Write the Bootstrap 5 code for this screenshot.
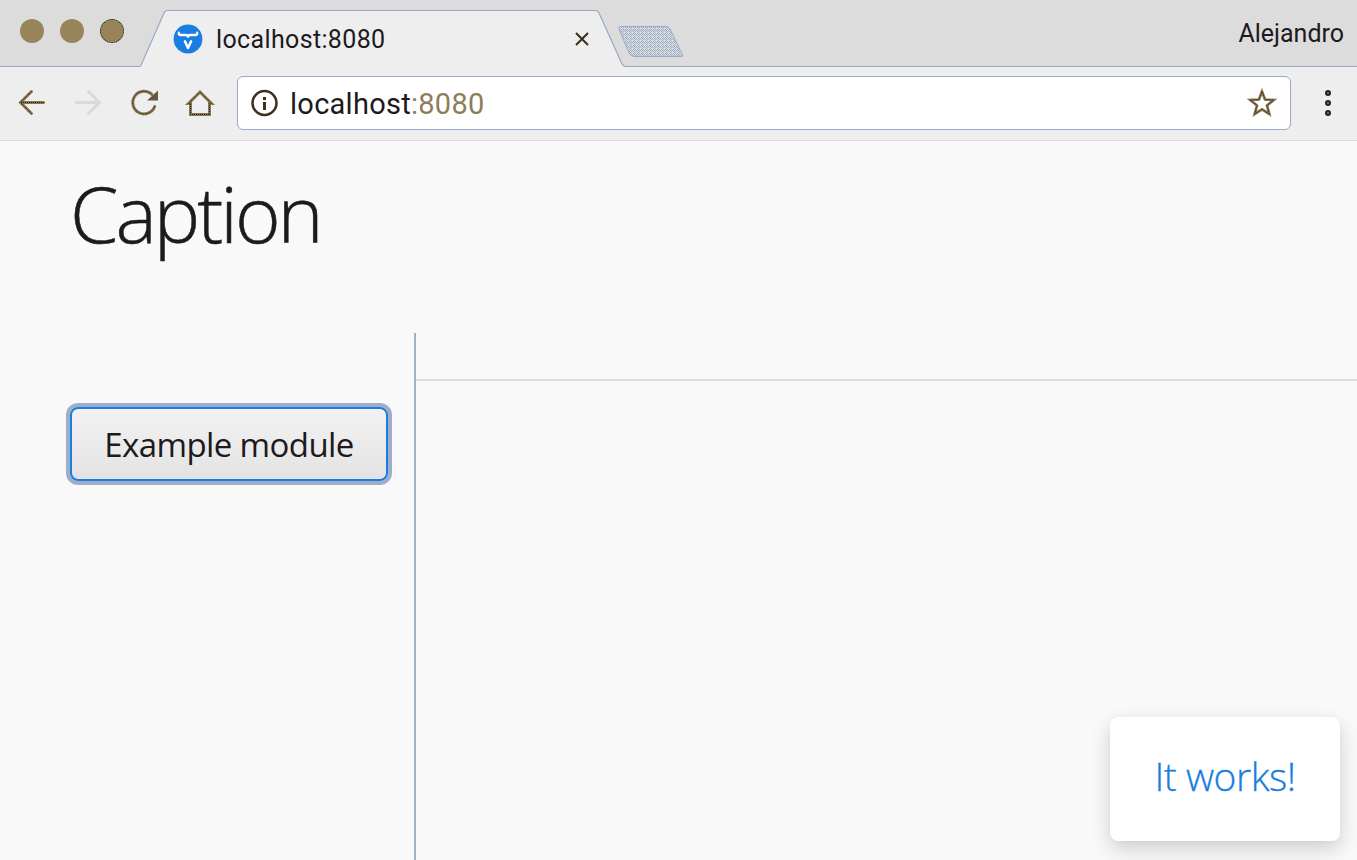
<!DOCTYPE html>
<html lang="en">
<head>
<meta charset="utf-8">
<title>localhost:8080</title>
<link href="https://cdn.jsdelivr.net/npm/bootstrap@5.3.0/dist/css/bootstrap.min.css" rel="stylesheet">
<style>
  body { background: #f9f9f9; color: #1c1a1c; font-family: "Open Sans", sans-serif; height: 860px; }
  svg { display: block; flex: none; }
  .chrome { font-family: Roboto, sans-serif; line-height: 1; }
  .tabstrip { height: 67px; background: #dcdcdc; border-bottom: 1px solid #98abc6; }
  .lights { gap: 16px; padding: 19px 0 0 20px; width: 140px; }
  .light { width: 24px; height: 24px; border-radius: 50%; background: #988459; }
  .light-last { border: 1px dotted #1c1a1c; }
  .browser-tab { width: 486px; height: 67px; padding: 10px 37px 0 33px; }
  .tab-shape { left: 0; top: 0; }
  .tab-title { font-size: 25px; letter-spacing: .36px; margin-left: 13px; padding-top: 2px; }
  .new-tab { margin: 25px 0 0 -9px; }
  .profile { font-size: 25px; letter-spacing: 0; padding: 21px 13px 0 0; }
  .toolbar { height: 74px; background: #eee; border-bottom: 1px solid #dcdcdc; padding: 9px 12px 11px 16px; }
  .nav-icons { gap: 24px; width: 221px; flex: none; }
  .outline { fill: none; stroke: #8c7850; stroke-width: 3; stroke-linecap: round; stroke-linejoin: miter; }
  .grain { fill: none; stroke: #1c1a1c; stroke-width: 1; stroke-dasharray: 1 1; }
  .address { width: 1054px; flex: none; height: 54px; background: #fff; border: 1px solid #98abc6; border-radius: 6px; padding: 0 12px; }
  .url { font-size: 29px; letter-spacing: .27px; margin-left: 10px; padding-top: 3px; }
  .port { color: #8e7d5b; }
  .menu-dots { margin-left: 20px; }
  .page { height: 719px; }
  .page-header { height: 192px; padding: 19px 0 0 70px; }
  .caption-title { font-size: 78px; font-weight: 300; letter-spacing: -3px; line-height: 106px; margin: 0; -webkit-text-stroke: .5px; }
  .side { width: 416px; border-right: 2px solid #a3b3ca; padding: 74px 0 0 70px; }
  .btn-module { width: 318px; height: 74px; border: 2px solid #197de1; border-radius: 8px; padding: 0; color: #1c1a1c;
    background: linear-gradient(#f2f2f2, #eee 30%, #e3e3e3); box-shadow: 0 0 0 4px #9dafc8; font-size: 33px; letter-spacing: -.6px; line-height: 71px; }
  .view-bar { height: 48px; border-bottom: 2px solid #dcdcdc; }
  .notice { right: 17px; bottom: 19px; width: 230px; height: 124px; border-radius: 8px; background: #fff; color: #197de1;
    font-size: 39px; font-weight: 300; letter-spacing: -.5px; box-shadow: 0 8px 20px rgba(0,0,0,.17), 0 0 5px rgba(0,0,0,.03); padding-bottom: 6px; -webkit-text-stroke: .3px; }
</style>
</head>
<body class="position-relative overflow-hidden">
<header class="chrome">
  <div class="tabstrip d-flex align-items-start">
    <div class="lights d-flex">
      <span class="light"></span><span class="light"></span><span class="light light-last"></span>
    </div>
    <div class="browser-tab position-relative d-flex align-items-center">
      <svg class="tab-shape position-absolute" width="486" height="67" viewBox="0 0 486 67">
        <path d="M0 67V66.500Q1 66 2 63L24 13Q25 10.500 28 10.500H455Q458 10.500 459 13L482 64Q483 66.500 486 66.500V67Z" fill="#eee"/>
        <path d="M0 66.500Q1 66 2 63L24 13Q25 10.500 28 10.500H455Q458 10.500 459 13L482 64Q483 66.500 486 66.500" fill="none" stroke="#98abc6" stroke-width="1.2"/>
      </svg>
      <svg class="position-relative" width="30" height="30" viewBox="0 0 30 30">
        <circle cx="15" cy="15" r="14.400" fill="#197de1"/>
        <path d="M5.800 8.600V9.800Q5.800 11 7.200 11H12.500Q15 11 15 12.800Q15 11 17.500 11H22.800Q24.200 11 24.200 9.800V8.600" fill="none" stroke="#fff" stroke-width="2.300" stroke-linecap="round" stroke-linejoin="round"/>
        <path d="M11.900 17.300L15 24L18.100 17.300" fill="none" stroke="#fff" stroke-width="2.500" stroke-linecap="round" stroke-linejoin="round"/>
      </svg>
      <span class="tab-title position-relative">localhost:8080</span>
      <svg class="position-relative ms-auto" width="14" height="14" viewBox="0 0 14 14"><path d="M1 1L13 13M13 1L1 13" stroke="#3b2d18" stroke-width="2"/></svg>
    </div>
    <svg class="new-tab position-relative" width="68" height="34" viewBox="0 0 68 34">
      <defs><pattern id="dots" width="4" height="4" patternUnits="userSpaceOnUse"><path fill="#dcdcdc" d="M0 0h4v4H0z"/><path fill="#9dafc8" d="M0 0h1v1H0zM2 0h1v1H2zM1 1h1v1H1zM3 1h1v1H3zM0 2h1v1H0zM2 2h1v1H2zM1 3h1v1H1z"/></pattern></defs>
      <path d="M4 1.500H49Q52 1.500 53 4L65 29Q67 31.500 64 31.500H17Q14 31.500 12 28L2 4Q1 1.500 4 1.500Z" fill="url(#dots)" stroke="#98abc6"/>
    </svg>
    <span class="profile ms-auto">Alejandro</span>
  </div>
  <div class="toolbar d-flex align-items-center">
    <div class="nav-icons d-flex">
      <svg width="32" height="32" viewBox="0 0 32 32"><path class="outline" d="M27.500 15.500H5M15.500 4.500L4.500 15.500L15.500 26.500"/><path class="grain" d="M28 15.500H5M15.500 4.500L4.500 15.500L15.500 26.500"/></svg>
      <svg width="32" height="32" viewBox="0 0 32 32" fill="none" stroke="#dadada" stroke-width="3" stroke-linecap="round"><path d="M4.500 15.500H27M16.500 4.500L27.500 15.500L16.500 26.500"/></svg>
      <svg width="32" height="32" viewBox="0 0 32 32"><path class="outline" d="M26.700 19.500A11.300 11.300 0 1 1 24 7.500"/><path class="grain" d="M26.700 19.500A11.300 11.300 0 1 1 24 7.500"/><path d="M30 3.500V13.500H19Z" fill="#67583c"/></svg>
      <svg width="32" height="32" viewBox="0 0 32 32"><path class="outline" stroke-width="2.600" d="M6.500 16.500H4.500L16 5L27.500 16.500H25.500V27.500H6.500Z"/><path class="grain" d="M6.500 16.500H4.500L16 5L27.500 16.500H25.500V27.500H6.500Z"/></svg>
    </div>
    <div class="address d-flex align-items-center">
      <svg width="30" height="30" viewBox="0 0 30 30"><circle cx="14.500" cy="15" r="12" fill="none" stroke="#3b3020" stroke-width="2.500"/><path d="M13 9h3v3h-3zM13 14h3v8h-3z" fill="#3b3020"/></svg>
      <span class="url">localhost<span class="port">:8080</span></span>
      <svg class="ms-auto" width="32" height="32" viewBox="0 0 32 32"><path fill="none" stroke="#8c7850" stroke-width="2.700" d="M16 4.500L19 12.500L27.800 13L21 18.400L23.300 27L16 22.300L8.700 27L11 18.400L4.200 13L13 12.500Z"/><path class="grain" d="M16 4.500L19 12.500L27.800 13L21 18.400L23.300 27L16 22.300L8.700 27L11 18.400L4.200 13L13 12.500Z"/></svg>
    </div>
    <svg class="menu-dots" width="34" height="32" viewBox="0 0 34 32" fill="#8c7850" stroke="#2a231a" stroke-width="2"><circle cx="17" cy="6" r="2"/><circle cx="17" cy="16" r="2"/><circle cx="17" cy="26" r="2"/></svg>
  </div>
</header>
<main class="page d-flex flex-column">
  <div class="page-header"><h1 class="caption-title">Caption</h1></div>
  <div class="d-flex flex-grow-1">
    <nav class="side flex-shrink-0"><button class="btn btn-module" type="button">Example module</button></nav>
    <section class="flex-grow-1"><div class="view-bar"></div></section>
  </div>
</main>
<div class="notice position-absolute d-flex align-items-center justify-content-center">It works!</div>
<script src="https://cdn.jsdelivr.net/npm/bootstrap@5.3.0/dist/js/bootstrap.bundle.min.js"></script>
</body>
</html>
